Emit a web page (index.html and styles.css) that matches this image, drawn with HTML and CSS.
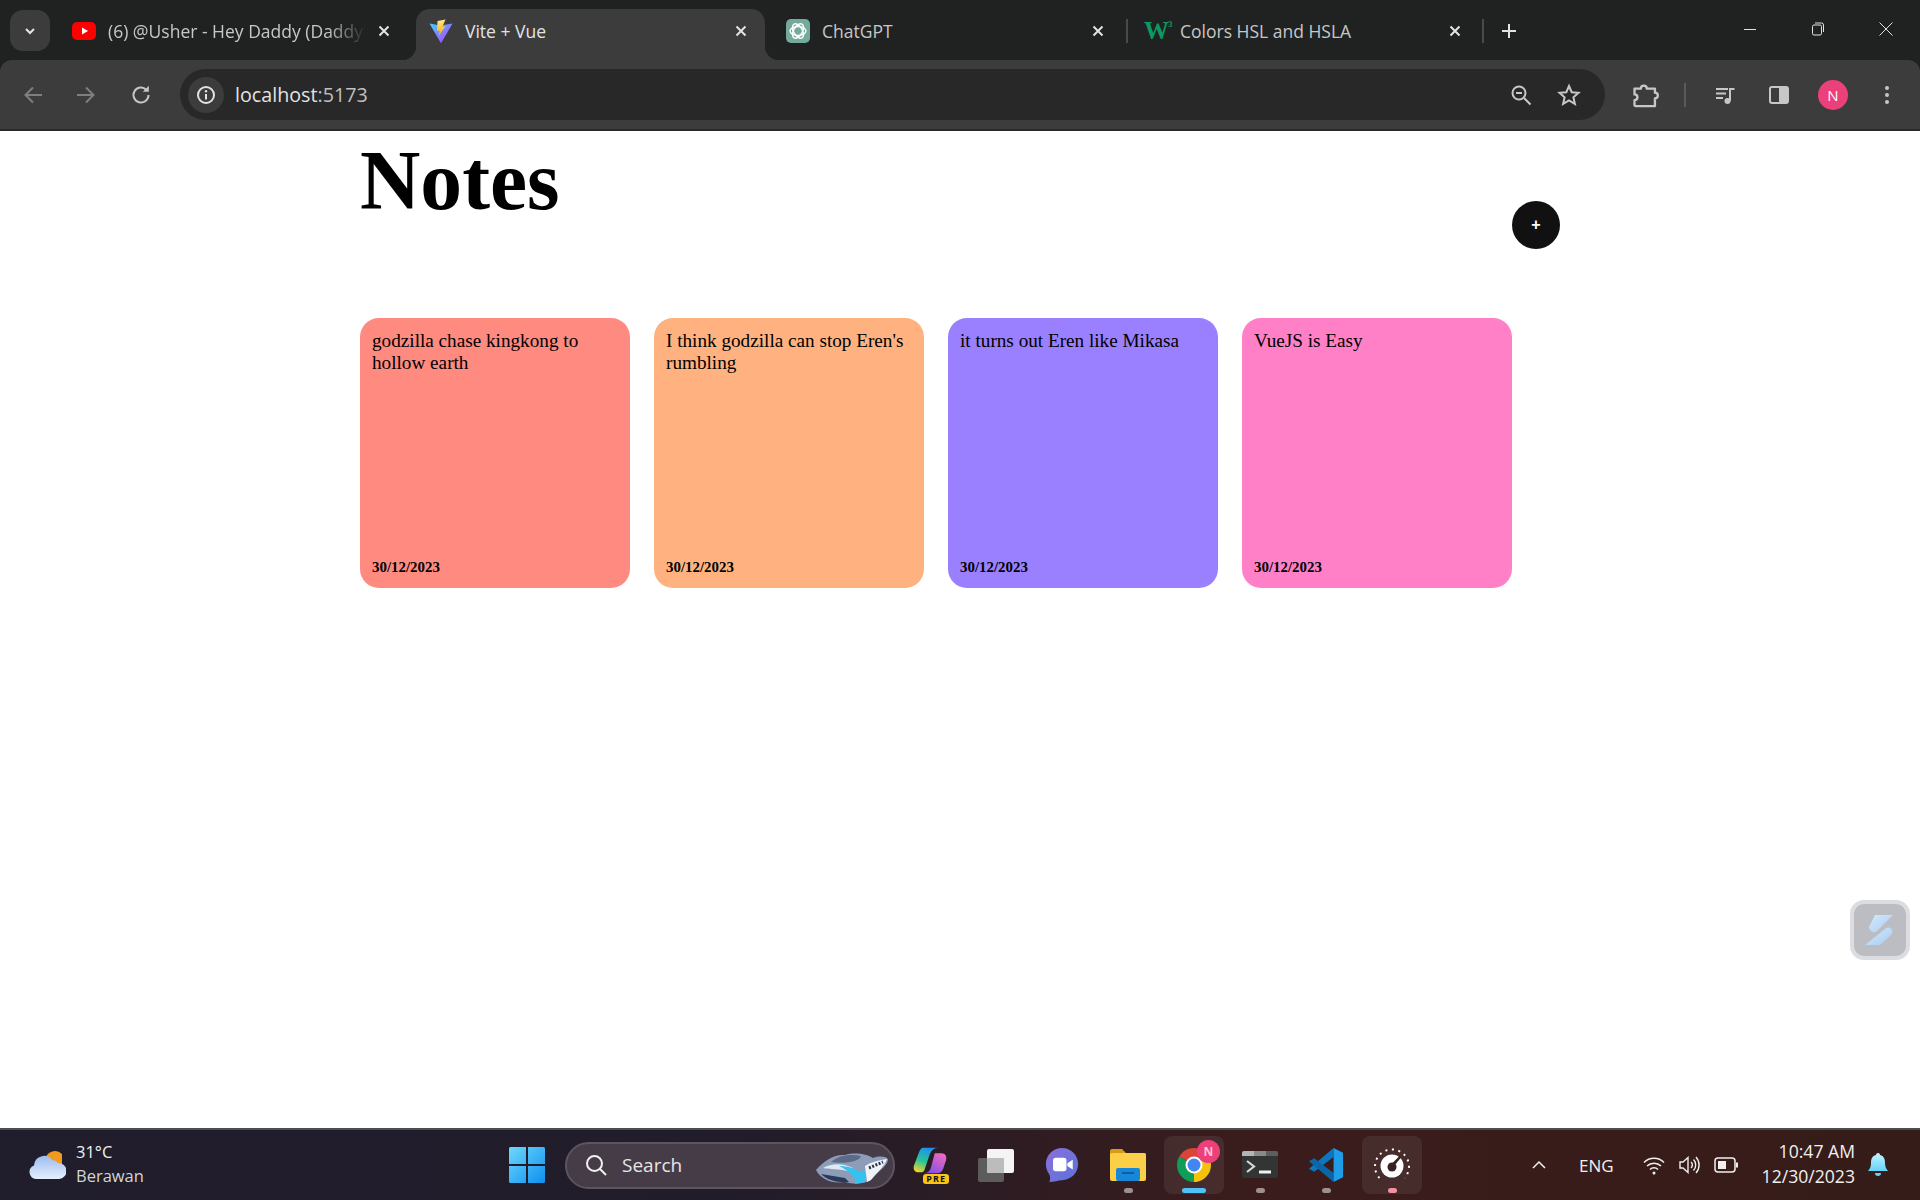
FILE: index.html
```html
<!DOCTYPE html>
<html lang="en">
<head>
  <meta charset="UTF-8" />
  <title>Vite + Vue</title>
  <link rel="stylesheet" href="styles.css">
</head>
<body>
  <!-- tab strip -->
  <div class="tabstrip">
    <button class="tab-search"><svg width="14" height="14" viewBox="0 0 14 14"><path d="M3 5l4 4 4-4" fill="none" stroke="#e3e3e3" stroke-width="2"/></svg></button>
    <div class="tab tab-yt">
      <svg class="favicon" viewBox="0 0 24 24"><rect x="0" y="3" width="24" height="18" rx="5" fill="#f00"/><path d="M10 8.5l6 3.5-6 3.5z" fill="#fff"/></svg>
      <span class="tab-title fade">(6) @Usher - Hey Daddy (Daddy's Home)</span>
      <svg class="tab-close" viewBox="0 0 12 12"><path d="M1.5 1.5l9 9M10.5 1.5l-9 9"/></svg>
    </div>
    <div class="tab tab-active">
      <svg class="favicon" viewBox="0 0 24 24">
        <defs>
          <linearGradient id="viteV" x1="0" y1="0" x2="1" y2="1"><stop offset="0" stop-color="#41d1ff"/><stop offset="1" stop-color="#bd34fe"/></linearGradient>
          <linearGradient id="viteB" x1="0" y1="0" x2="0" y2="1"><stop offset="0" stop-color="#ffea83"/><stop offset="1" stop-color="#ffa800"/></linearGradient>
        </defs>
        <path d="M0.5 4.5L11.5 6.5 23.5 4.5 12.5 23.5c-.3.5-.8.5-1 0z" fill="url(#viteV)"/>
        <path d="M16.5 0.5L8.5 2 8 12l2.6-.6-.8 5.4 6.6-9.6-3 .6z" fill="url(#viteB)"/>
      </svg>
      <span class="tab-title">Vite + Vue</span>
      <svg class="tab-close" viewBox="0 0 12 12"><path d="M1.5 1.5l9 9M10.5 1.5l-9 9"/></svg>
    </div>
    <div class="tab tab-gpt">
      <svg class="favicon" viewBox="0 0 24 24"><rect width="24" height="24" rx="5" fill="#74aa9c"/><g fill="none" stroke="#fff" stroke-width="1.4"><ellipse cx="12" cy="12" rx="8" ry="4.4"/><ellipse cx="12" cy="12" rx="8" ry="4.4" transform="rotate(60 12 12)"/><ellipse cx="12" cy="12" rx="8" ry="4.4" transform="rotate(120 12 12)"/></g></svg>
      <span class="tab-title">ChatGPT</span>
      <svg class="tab-close" viewBox="0 0 12 12"><path d="M1.5 1.5l9 9M10.5 1.5l-9 9"/></svg>
    </div>
    <div class="tab-sep"></div>
    <div class="tab tab-w3">
      <span class="w3-logo">W<sup>3</sup></span>
      <span class="tab-title">Colors HSL and HSLA</span>
      <svg class="tab-close" viewBox="0 0 12 12"><path d="M1.5 1.5l9 9M10.5 1.5l-9 9"/></svg>
    </div>
    <div class="tab-sep"></div>
    <svg class="new-tab" viewBox="0 0 16 16"><path d="M8 1v14M1 8h14" fill="none" stroke="#e3e3e3" stroke-width="2"/></svg>
    <div class="win-controls">
      <svg viewBox="0 0 16 16"><path d="M2 8.5h12" stroke="#e3e3e3" fill="none"/></svg>
      <svg viewBox="0 0 16 16"><path d="M2.5 5.5a1.5 1.5 0 0 1 1.5-1.5h6a1.5 1.5 0 0 1 1.5 1.5v7a1.5 1.5 0 0 1-1.5 1.500h-6a1.5 1.5 0 0 1-1.5-1.5zM5 2h6.5a2 2 0 0 1 2 2v7" stroke="#e3e3e3" fill="none"/></svg>
      <svg viewBox="0 0 16 16"><path d="M1.5 1.5l13 13M14.5 1.5l-13 13" stroke="#e3e3e3" fill="none"/></svg>
    </div>
  </div>

  <!-- toolbar -->
  <div class="toolbar">
    <svg class="tool tool-back" viewBox="0 0 24 24"><path d="M21 12H5M12 4.5L4.5 12l7.5 7.5" stroke="#7f7f7f"/></svg>
    <svg class="tool tool-fwd" viewBox="0 0 24 24"><path d="M3 12h16M12 4.5l7.5 7.5-7.5 7.5" stroke="#7f7f7f"/></svg>
    <svg class="tool tool-reload" viewBox="0 0 24 24"><path d="M19.5 12a7.5 7.5 0 1 1-2.2-5.3" stroke="#c7c7c7"/><path d="M19.8 2.8v6h-6z" fill="#c7c7c7"/></svg>
    <div class="omnibox">
      <span class="site-info"><svg width="20" height="20" viewBox="0 0 20 20"><circle cx="10" cy="10" r="8" fill="none" stroke="#e3e3e3" stroke-width="2"/><path d="M10 9v5.5" stroke="#e3e3e3" stroke-width="2"/><circle cx="10" cy="6.2" r="1.2" fill="#e3e3e3"/></svg></span>
      <span class="url">localhost<span class="url-port">:5173</span></span>
      <svg class="tool omni-zoom" viewBox="0 0 24 24"><circle cx="10" cy="10" r="6.5" stroke="#c7c7c7"/><path d="M15 15l6.500 6.500M7 10h6" stroke="#c7c7c7"/></svg>
      <svg class="tool omni-star" viewBox="0 0 24 24"><path d="M12 3l2.700 6.200 6.800.6-5.100 4.500 1.500 6.600L12 17.400l-5.900 3.500 1.500-6.600L2.500 9.800l6.800-.6z" stroke="#c7c7c7"/></svg>
    </div>
    <svg class="tool tool-ext" viewBox="0 0 24 24"><path d="M3 6.500h5.500a2.500 2.500 0 0 1 5 0H20.500V10a2.500 2.500 0 0 1 0 5v6.500H4a1 1 0 0 1-1-1V16.500a2.500 2.500 0 0 0 0-5z" stroke="#c7c7c7" stroke-linejoin="round"/></svg>
    <div class="tool-sep"></div>
    <svg class="tool tool-media" viewBox="0 0 24 24"><path d="M3 6h12M3 10.500h10M3 15h7" stroke="#c7c7c7"/><path d="M17 18V6h4.500" stroke="#c7c7c7"/><circle cx="14.500" cy="18" r="3" fill="#c7c7c7"/></svg>
    <svg class="tool tool-side" viewBox="0 0 24 24"><rect x="12" y="4" width="9" height="16" fill="#c7c7c7"/><rect x="3" y="4" width="18" height="16" rx="2" stroke="#c7c7c7"/></svg>
    <span class="avatar">N</span>
    <svg class="tool tool-menu" viewBox="0 0 24 24"><circle cx="12" cy="5" r="2" fill="#c7c7c7"/><circle cx="12" cy="12" r="2" fill="#c7c7c7"/><circle cx="12" cy="19" r="2" fill="#c7c7c7"/></svg>
  </div>

  <!-- the page itself -->
  <main class="page">
    <div class="container">
      <header class="notes-header">
        <h1>Notes</h1>
        <button class="add-btn">+</button>
      </header>
      <div class="cards">
        <div class="card card-red">
          <p>godzilla chase kingkong to hollow earth</p>
          <p class="date">30/12/2023</p>
        </div>
        <div class="card card-orange">
          <p>I think godzilla can stop Eren's rumbling</p>
          <p class="date">30/12/2023</p>
        </div>
        <div class="card card-purple">
          <p>it turns out Eren like Mikasa</p>
          <p class="date">30/12/2023</p>
        </div>
        <div class="card card-pink">
          <p>VueJS is Easy</p>
          <p class="date">30/12/2023</p>
        </div>
      </div>
    </div>
    <div class="float-widget">
      <svg width="36" height="36" viewBox="0 0 36 36">
        <defs><linearGradient id="fw" x1="0" y1="0" x2="1" y2="1"><stop offset="0" stop-color="#d5e8fb"/><stop offset="1" stop-color="#a9cdf3"/></linearGradient></defs>
        <path d="M13 3h18L15 19c-2 2-4 1.500-6 0-2-2-3-4-1-6z" fill="url(#fw)"/>
        <path d="M23 17c2-2 4-2 6-.5 2 2 2 4 .5 6L18 33H3z" fill="url(#fw)"/>
      </svg>
    </div>
  </main>

  <!-- windows taskbar -->
  <footer class="taskbar">
    <div class="weather">
      <svg width="38" height="32" viewBox="0 0 38 32">
        <defs><linearGradient id="cloud" x1="0" y1="0" x2="0" y2="1"><stop offset="0" stop-color="#9dbcf0"/><stop offset="1" stop-color="#e6effc"/></linearGradient></defs>
        <path d="M17 11a10 10 0 0 1 17-6v13H18z" fill="#f29a1f"/>
        <path d="M8 30a7 7 0 0 1-2-13.500A10 10 0 0 1 24 11a8 8 0 0 1 6 3 8 8 0 0 1 1 16z" fill="url(#cloud)"/>
      </svg>
      <div class="weather-text"><span>31°C</span><span class="weather-sub">Berawan</span></div>
    </div>
    <svg class="start" width="36" height="36" viewBox="0 0 36 36">
      <defs><linearGradient id="win" x1="0" y1="0" x2="1" y2="1"><stop offset="0" stop-color="#6fd9fb"/><stop offset="1" stop-color="#0d8ff0"/></linearGradient></defs>
      <path d="M0 1.500A1.500 1.500 0 0 1 1.500 0H17v17H0zM19 0h15.500A1.500 1.500 0 0 1 36 1.500V17H19zM0 19h17v17H1.500A1.500 1.500 0 0 1 0 34.500zM19 19h17v15.500a1.500 1.500 0 0 1-1.500 1.500H19z" fill="url(#win)"/>
    </svg>
    <div class="search-pill">
      <svg width="24" height="24" viewBox="0 0 24 24"><circle cx="10.500" cy="10.500" r="7.500" fill="none" stroke="#f0f0f0" stroke-width="2"/><path d="M16 16l6 6" stroke="#f0f0f0" stroke-width="2"/></svg>
      <span>Search</span>
      <svg class="search-art" width="78" height="46" viewBox="0 0 78 46">
        <path d="M1 28C8 20 18 12 30 13c10-3 22-1 28 3 6-2 12-2 15 1 0 7-9 11-15 19-6 6-18 7-28 4-12 2-24-2-29-12z" fill="#8d9cb8"/>
        <path d="M16 20c8-7 20-8 30-6-2 6-16 8-30 6z" fill="#5c6a85"/>
        <path d="M8 26c10-6 22-4 30 0l-2 4c-12-4-22-2-28-4z" fill="#dfe9f5"/>
        <path d="M24 24c8 0 16 2 20 6l8-2-2 12-10 2c2-8-8-14-16-18z" fill="#35c2ee"/>
        <path d="M50 24c6-4 14-6 22-7-2 7-10 13-16 21l-4 2z" fill="#eef3f8"/>
        <path d="M54 26l14-6" stroke="#27324a" stroke-width="3" stroke-dasharray="2 1.500" fill="none"/>
        <path d="M6 32l24 4 4 4c-12 1-22-2-28-8z" fill="#2c3a5a"/>
      </svg>
    </div>
    <div class="apps">
      <div class="app app-copilot">
        <svg width="36" height="30" viewBox="0 0 38 30">
          <defs><linearGradient id="cp1" x1="0.6" y1="0" x2="0.2" y2="1"><stop offset="0" stop-color="#1f8ef0"/><stop offset="0.55" stop-color="#27c49a"/><stop offset="1" stop-color="#f5d327"/></linearGradient><linearGradient id="cp2" x1="0.8" y1="0" x2="0.2" y2="1"><stop offset="0" stop-color="#ee6bc0"/><stop offset="1" stop-color="#7f4fe8"/></linearGradient></defs>
          <path d="M12 2h16c-5 0-8 3-10 9l-5 15c-1 2-3 2-6 2-4 0-6-3-5-7L7 8c1-4 3-6 5-6z" fill="url(#cp1)"/>
          <path d="M24 8h7c4 0 6 3 5 7l-3 9c-1 3-3 5-7 5H13c3 0 6-2 7-6z" fill="url(#cp2)"/>
        </svg>
        <span class="pre-badge">PRE</span>
      </div>
      <div class="app">
        <svg width="36" height="33" viewBox="0 0 36 33">
          <rect x="0" y="9" width="26" height="24" rx="2" fill="#5c5c5c"/>
          <rect x="9" y="0" width="27" height="24" rx="2" fill="#f4f4f4"/>
          <rect x="9" y="9" width="17" height="15" rx="1" fill="#bcbcbc"/>
        </svg>
      </div>
      <div class="app">
        <svg width="34" height="36" viewBox="0 0 38 40">
          <defs><linearGradient id="meet" x1="0" y1="0" x2="1" y2="1"><stop offset="0" stop-color="#8c6fdc"/><stop offset="1" stop-color="#5a73d8"/></linearGradient></defs>
          <path d="M19 1c10 0 18 8 18 18s-8 18-18 18c-4 0-9 2-14 2 1-3 1-5 0-8C2 27 1 23 1 19 1 9 9 1 19 1z" fill="url(#meet)"/>
          <rect x="9" y="12" width="15" height="15" rx="3" fill="#fff"/>
          <path d="M25 18l6-4v11l-6-4z" fill="#fff"/>
        </svg>
      </div>
      <div class="app app-dot">
        <svg width="36" height="34" viewBox="0 0 36 34">
          <path d="M0 3a2 2 0 0 1 2-2h10l4 4h18a2 2 0 0 1 2 2v4H0z" fill="#d99a14"/>
          <rect x="0" y="5" width="36" height="28" rx="2" fill="#fbcf47"/>
          <rect x="6" y="20" width="24" height="13" rx="2" fill="#1787d8"/>
          <rect x="12" y="24" width="12" height="2" fill="#0b5fa8"/>
        </svg>
      </div>
      <div class="app app-box app-bar">
        <svg width="36" height="36" viewBox="0 0 36 36">
          <path d="M18 18L3.300 9.500A17 17 0 0 1 32.700 9.500z" fill="#db4437"/>
          <path d="M18 18L32.700 9.500A17 17 0 0 1 18 35z" fill="#f4c20d"/>
          <path d="M18 18L18 35A17 17 0 0 1 3.300 9.500z" fill="#0f9d58"/>
          <circle cx="18" cy="18" r="8.500" fill="#fff"/>
          <circle cx="18" cy="18" r="6.500" fill="#4285f4"/>
        </svg>
        <span class="chrome-badge">N</span>
      </div>
      <div class="app app-dot">
        <svg width="36" height="28" viewBox="0 0 36 28">
          <rect x="0" y="0" width="36" height="27" rx="2" fill="#333535"/>
          <path d="M0 2a2 2 0 0 1 2-2h10v5H0z" fill="#b5b5b5"/>
          <rect x="12" y="0" width="12" height="5" fill="#8a8a8a"/>
          <path d="M24 0h10a2 2 0 0 1 2 2v3H24z" fill="#5e5e5e"/>
          <path d="M5 10l7 5.500-7 5.500" fill="none" stroke="#d9d9d9" stroke-width="2.200"/>
          <path d="M17 21h12" stroke="#f0f0f0" stroke-width="3"/>
        </svg>
      </div>
      <div class="app app-dot">
        <svg width="36" height="36" viewBox="0 0 38 38">
          <path d="M27 1v9.500L6.500 26 1 23z" fill="#0f75bf"/>
          <path d="M27 37v-9.500L6.500 12 1 15z" fill="#0a66a8"/>
          <path d="M27 1l10 5v26l-10 5z" fill="#1e9ce8"/>
        </svg>
      </div>
      <div class="app app-box app-dot-pink">
        <svg width="38" height="38" viewBox="0 0 38 38">
          <circle cx="19" cy="20" r="11.500" fill="#fff"/>
          <circle cx="19" cy="21" r="4.500" fill="#3a2222"/>
          <path d="M17.500 19l9-9 1.500 1.500-8 10z" fill="#3a2222"/>
          <path d="M6.500 32A17 17 0 1 1 31.500 32" fill="none" stroke="#fff" stroke-width="2" stroke-dasharray="2 4.500"/>
        </svg>
      </div>
    </div>
    <div class="tray">
      <svg class="tray-chev" width="16" height="16" viewBox="0 0 16 16"><path d="M2 11l6-6 6 6" fill="none" stroke="#f0f0f0" stroke-width="1.500"/></svg>
      <span class="tray-lang">ENG</span>
      <svg class="tray-wifi" width="24" height="24" viewBox="0 0 24 24"><path d="M2 9.500a14 14 0 0 1 20 0M5 13a10 10 0 0 1 14 0M8 16.500a5.500 5.500 0 0 1 8 0" fill="none" stroke="#f0f0f0" stroke-width="1.500"/><circle cx="12" cy="20" r="1.500" fill="#f0f0f0"/></svg>
      <svg class="tray-vol" width="24" height="24" viewBox="0 0 24 24"><path d="M3 9h3l5-4.500v15L6 15H3z" fill="none" stroke="#f0f0f0" stroke-width="1.400"/><path d="M14 9a4 4 0 0 1 0 6M16.500 6.500a8 8 0 0 1 0 11M19 4a12 12 0 0 1 0 16" fill="none" stroke="#f0f0f0" stroke-width="1.400"/></svg>
      <svg class="tray-bat" width="26" height="24" viewBox="0 0 26 24"><rect x="2" y="5" width="20" height="14" rx="3" fill="none" stroke="#f0f0f0" stroke-width="1.500"/><rect x="5" y="8" width="8" height="8" fill="#f0f0f0"/><rect x="23" y="9.500" width="2" height="5" fill="#f0f0f0"/></svg>
      <div class="clock"><span>10:47 AM</span><span>12/30/2023</span></div>
      <svg class="tray-bell" width="22" height="26" viewBox="0 0 22 26">
        <defs><linearGradient id="bell" x1="0" y1="0" x2="0" y2="1"><stop offset="0" stop-color="#c8f3ff"/><stop offset="1" stop-color="#62d3f8"/></linearGradient></defs>
        <path d="M11 1a2 2 0 0 1 2 2c4 1 5 4 5 8 0 3 1 6 3 8H1c2-2 3-5 3-8 0-4 1-7 5-8a2 2 0 0 1 2-2z" fill="url(#bell)"/>
        <path d="M8 21h6a3 3 0 0 1-6 0z" fill="#62d3f8"/>
      </svg>
    </div>
  </footer>
</body>
</html>
```

FILE: styles.css
```css
html, body {
  margin: 0;
  padding: 0;
  height: 100%;
}

body {
  width: 1920px;
  height: 1200px;
  overflow: hidden;
  display: flex;
  flex-direction: column;
  background-color: #202222;
  font-family: "Open Sans", "Noto Sans", sans-serif;
}

/* tab strip */
.tabstrip {
  height: 60px;
  flex-shrink: 0;
  display: flex;
  align-items: flex-start;
  background-color: #202222;
  padding-left: 10px;
  box-sizing: border-box;
}

.tab-search {
  width: 40px;
  height: 41px;
  margin-top: 10px;
  border: none;
  padding: 0;
  border-radius: 13px;
  background-color: #3c3c3c;
  display: flex;
  align-items: center;
  justify-content: center;
}

.tab {
  height: 51px;
  margin-top: 9px;
  padding-bottom: 7px;
  display: flex;
  align-items: center;
  box-sizing: border-box;
  position: relative;
}

.tab-yt {
  width: 366px;
  padding-left: 22px;
}

.tab-yt .tab-close {
  margin-right: 26px;
}

.tab-active {
  width: 349px;
  padding-left: 13px;
  background-color: #3c3c3c;
  border-radius: 14px 14px 0 0;
}

.tab-active::before,
.tab-active::after {
  content: "";
  position: absolute;
  bottom: 0;
  width: 14px;
  height: 14px;
}

.tab-active::before {
  left: -14px;
  background: radial-gradient(circle at 0 0, transparent 14px, #3c3c3c 14.5px);
}

.tab-active::after {
  right: -14px;
  background: radial-gradient(circle at 100% 0, transparent 14px, #3c3c3c 14.5px);
}

.tab-gpt {
  width: 361px;
  padding-left: 21px;
}

.tab-gpt .tab-close {
  margin-right: 22px;
}

.tab-w3 .tab-close {
  margin-right: 21px;
}

.tab-w3 {
  width: 354px;
  padding-left: 16px;
}

.favicon {
  width: 24px;
  height: 24px;
  flex-shrink: 0;
}

.w3-logo {
  width: 24px;
  flex-shrink: 0;
  font-family: "Liberation Serif", serif;
  font-weight: bold;
  font-size: 25px;
  line-height: 24px;
  color: #0a9a62;
  letter-spacing: -1px;
}

.w3-logo sup {
  font-size: 9px;
  line-height: 0;
  vertical-align: 12px;
  letter-spacing: 0;
  color: #0a9a62;
}

.tab-title {
  margin-left: 12px;
  flex: 1;
  min-width: 0;
  white-space: nowrap;
  overflow: hidden;
  font-size: 17.5px;
  color: #c7c7c7;
}

.tab-active .tab-title {
  color: #e3e3e3;
}

.fade {
  -webkit-mask-image: linear-gradient(to right, #000 85%, transparent 100%);
  mask-image: linear-gradient(to right, #000 85%, transparent 100%);
}

.tab-close {
  width: 12px;
  height: 12px;
  flex-shrink: 0;
  margin-left: 12px;
  margin-right: 18px;
  fill: none;
  stroke: #e3e3e3;
  stroke-width: 2;
}

.tab-sep {
  width: 2px;
  height: 24px;
  margin-top: 19px;
  background-color: #4a4a4a;
}

.new-tab {
  width: 16px;
  height: 16px;
  margin: 23px 0 0 17px;
}

.win-controls {
  margin-left: auto;
  margin-top: 21px;
  display: flex;
  gap: 52px;
  padding-right: 26px;
}

.win-controls svg {
  width: 16px;
  height: 16px;
}

/* toolbar */
.toolbar {
  height: 71px;
  flex-shrink: 0;
  display: flex;
  align-items: center;
  box-sizing: border-box;
  background-color: #3c3c3c;
  border-radius: 12px 12px 0 0;
  border-bottom: 2px solid #2a2a2a;
  padding-left: 21px;
}

.tool {
  width: 24px;
  height: 24px;
  flex-shrink: 0;
  fill: none;
  stroke-width: 2;
}

.tool-fwd {
  margin-left: 29px;
}

.tool-reload {
  margin-left: 31px;
}

.omnibox {
  width: 1425px;
  height: 51px;
  margin-left: 27px;
  display: flex;
  align-items: center;
  box-sizing: border-box;
  background-color: #282828;
  border-radius: 26px;
  padding-left: 8px;
}

.site-info {
  width: 36px;
  height: 36px;
  border-radius: 50%;
  background-color: #3c3c3c;
  display: flex;
  align-items: center;
  justify-content: center;
}

.url {
  margin-left: 11px;
  font-size: 19.7px;
  color: #e3e3e3;
}

.url-port {
  color: #c0c0c0;
}

.omni-zoom {
  margin-left: auto;
}

.omni-star {
  margin-left: 24px;
  margin-right: 24px;
}

.tool-ext {
  width: 28px;
  height: 28px;
  margin-left: 26px;
}

.tool-sep {
  width: 2px;
  height: 24px;
  margin-left: 25px;
  background-color: #5a5a5a;
}

.tool-media {
  margin-left: 27px;
}

.tool-side {
  margin-left: 30px;
}

.avatar {
  width: 30px;
  height: 30px;
  margin-left: 27px;
  border-radius: 50%;
  background-color: #ec407a;
  color: #fff;
  font-size: 15px;
  display: flex;
  align-items: center;
  justify-content: center;
}

.tool-menu {
  margin-left: 27px;
}

/* notes page */
.page {
  flex: 1;
  position: relative;
  background-color: #fff;
  color: #000;
  font-family: "Liberation Serif", "Times New Roman", serif;
  overflow: hidden;
}

.container {
  width: 1200px;
  margin: 0 auto;
}

.notes-header {
  height: 187px;
  display: flex;
  justify-content: space-between;
  align-items: flex-start;
}

h1 {
  margin: 0;
  font-size: 83.6px;
  line-height: 96px;
  padding-top: 2px;
}

.add-btn {
  width: 48px;
  height: 48px;
  margin-top: 70px;
  border: none;
  padding: 0;
  border-radius: 50%;
  background-color: #111;
  color: #fff;
  font-family: "Liberation Sans", Arial, sans-serif;
  font-size: 16px;
  font-weight: bold;
}

.cards {
  display: flex;
  flex-wrap: wrap;
  gap: 24px;
}

.card {
  width: 270px;
  height: 270px;
  box-sizing: border-box;
  padding: 12px;
  border-radius: 19px;
  display: flex;
  flex-direction: column;
  justify-content: space-between;
  font-size: 19.2px;
  line-height: 22px;
}

.card p {
  margin: 0;
}

.card .date {
  font-size: 14.9px;
  line-height: 17px;
  font-weight: bold;
}

.card-red {
  background-color: #ff8a80;
}

.card-orange {
  background-color: #ffb280;
}

.card-purple {
  background-color: #9a80ff;
}

.card-pink {
  background-color: #ff80c6;
}

.float-widget {
  position: absolute;
  right: 10px;
  top: 769px;
  width: 60px;
  height: 60px;
  box-sizing: border-box;
  border: 4px solid #dcdde0;
  border-radius: 14px;
  background-color: #bcbdc2;
  display: flex;
  align-items: center;
  justify-content: center;
}

/* taskbar */
.taskbar {
  height: 72px;
  flex-shrink: 0;
  display: flex;
  align-items: center;
  box-sizing: border-box;
  border-top: 2px solid #4e4e4e;
  background: linear-gradient(to right, #201d2c 0%, #221c2a 40%, #3a1c1c 65%, #361c18 100%);
  color: #f0f0f0;
  font-size: 16.5px;
}

.weather {
  width: 509px;
  flex-shrink: 0;
  display: flex;
  align-items: center;
  box-sizing: border-box;
  padding-left: 28px;
}

.weather-text {
  margin-left: 10px;
  padding-bottom: 2px;
  display: flex;
  flex-direction: column;
  line-height: 24px;
}

.weather-sub {
  color: #d4d4d4;
}

.start {
  flex-shrink: 0;
}

.search-pill {
  width: 330px;
  height: 47px;
  margin-left: 20px;
  flex-shrink: 0;
  display: flex;
  align-items: center;
  box-sizing: border-box;
  padding-left: 17px;
  border: 2px solid #5d5460;
  border-radius: 24px;
  background-color: #463c48;
  font-size: 19px;
  color: #e6e6e6;
  position: relative;
}

.search-pill span {
  margin-left: 14px;
}

.search-art {
  position: absolute;
  right: 0;
  top: -2px;
}

.apps {
  margin-left: 5px;
  display: flex;
}

.app {
  width: 60px;
  height: 58px;
  margin-right: 6px;
  display: flex;
  align-items: center;
  justify-content: center;
  position: relative;
  border-radius: 8px;
}

.app-copilot svg {
  margin-bottom: 10px;
}

.app-box {
  background-color: rgba(255, 255, 255, 0.07);
}

.app-dot::after,
.app-dot-pink::after,
.app-bar::after {
  content: "";
  position: absolute;
  bottom: 1px;
  left: 50%;
  width: 9px;
  height: 5px;
  margin-left: -4px;
  border-radius: 3px;
  background-color: #9c9090;
}

.app-dot-pink::after {
  background-color: #f4919f;
}

.app-bar::after {
  width: 24px;
  margin-left: -12px;
  background-color: #4fc3f7;
}

.pre-badge {
  position: absolute;
  right: 11px;
  bottom: 10px;
  padding: 0 3px;
  border-radius: 3px;
  background-color: #fcc419;
  color: #111;
  font-size: 9px;
  line-height: 10px;
  font-weight: bold;
  letter-spacing: 1px;
}

.chrome-badge {
  position: absolute;
  top: 4px;
  right: 4px;
  width: 23px;
  height: 23px;
  border-radius: 50%;
  background-color: #ec407a;
  color: #ffc4d6;
  font-size: 12px;
  font-weight: bold;
  display: flex;
  align-items: center;
  justify-content: center;
}

.tray {
  margin-left: auto;
  display: flex;
  align-items: center;
  padding-right: 31px;
}

.tray-lang {
  margin-left: 32px;
  font-size: 17px;
}

.tray-wifi {
  margin-left: 28px;
}

.tray-vol {
  margin-left: 11px;
}

.tray-bat {
  margin-left: 12px;
}

.clock {
  margin-left: 23px;
  padding-bottom: 2px;
  display: flex;
  flex-direction: column;
  align-items: flex-end;
  font-size: 17.6px;
  line-height: 25px;
}

.tray-bell {
  margin-left: 12px;
}
```
